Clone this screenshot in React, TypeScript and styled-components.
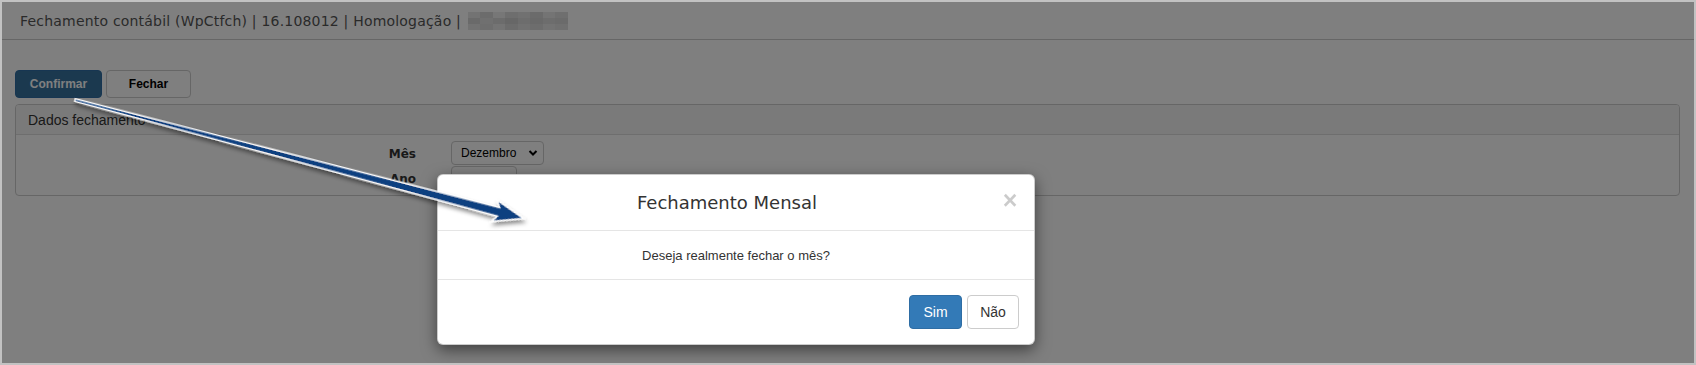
import React from "react";
import styled, { createGlobalStyle } from "styled-components";

const Global = createGlobalStyle`
  html, body { margin: 0; padding: 0; background: #ffffff; }
  body { width: 1696px; height: 365px; overflow: hidden; }
  * { box-sizing: border-box; }
`;

const Frame = styled.div`
  position: relative;
  width: 1696px;
  height: 365px;
  border: 2px solid #c2c2c2;
  background: #ffffff;
  overflow: hidden;
`;

const TopBar = styled.div`
  height: 38px;
  border-bottom: 1px solid #cccccc;
  display: flex;
  align-items: center;
  padding-left: 18px;
  font-family: "DejaVu Sans", Verdana, sans-serif;
  font-size: 14px;
  letter-spacing: 0.2px;
  color: #555555;
  gap: 7px;
`;

const Blur = styled.div`
  display: grid;
  grid-template-columns: repeat(8, 12.5px);
  grid-template-rows: repeat(3, 6px);
  height: 18px;
`;

const BlurCell = styled.div<{ $c: string }>`
  background: ${(p) => p.$c};
`;

const Content = styled.div`
  padding: 30px 14px 0 13px;
`;

const Toolbar = styled.div`
  display: flex;
  gap: 4px;
  margin-bottom: 6px;
`;

const ToolButton = styled.button<{ $primary?: boolean; $w: number }>`
  width: ${(p) => p.$w}px;
  height: 28px;
  border-radius: 4px;
  border: 1px solid ${(p) => (p.$primary ? "#2e6da4" : "#cccccc")};
  background: ${(p) => (p.$primary ? "#36729f" : "#ffffff")};
  color: ${(p) => (p.$primary ? "#ffffff" : "#000000")};
  font-family: "Liberation Sans", Arial, sans-serif;
  font-weight: bold;
  font-size: 12px;
  padding: 0;
`;

const Panel = styled.div`
  border: 1px solid #cccccc;
  border-radius: 4px;
`;

const PanelHeading = styled.div`
  height: 30px;
  background: #f5f5f5;
  border-bottom: 1px solid #dddddd;
  border-radius: 3px 3px 0 0;
  display: flex;
  align-items: center;
  padding-left: 12px;
  font-family: "Liberation Sans", Arial, sans-serif;
  font-size: 14px;
  color: #333333;
`;

const PanelBody = styled.div`
  display: grid;
  grid-template-columns: 400px auto;
  column-gap: 35px;
  row-gap: 1px;
  padding: 6px 0 5px 0;
`;

const FieldLabel = styled.div`
  height: 24px;
  display: flex;
  align-items: center;
  justify-content: flex-end;
  padding-top: 2px;
  font-family: "DejaVu Sans", Verdana, sans-serif;
  font-weight: bold;
  font-size: 12px;
  color: #333333;
`;

const SelectBox = styled.div`
  width: 93px;
  height: 24px;
  border: 1px solid #cccccc;
  border-radius: 4px;
  display: flex;
  align-items: center;
  justify-content: space-between;
  padding: 0 5px 0 9px;
  font-family: "Liberation Sans", Arial, sans-serif;
  font-size: 12px;
  color: #000000;
`;

const YearInput = styled.div`
  width: 66px;
  height: 24px;
  border: 1px solid #cccccc;
  border-radius: 4px;
`;

const Backdrop = styled.div`
  position: absolute;
  inset: 0;
  background: rgba(0, 0, 0, 0.5);
`;

const Modal = styled.div`
  position: absolute;
  left: 435px;
  top: 172px;
  width: 598px;
  background: #ffffff;
  border: 1px solid rgba(0, 0, 0, 0.2);
  border-radius: 6px;
  box-shadow: 0 5px 15px rgba(0, 0, 0, 0.5);
  display: flex;
  flex-direction: column;
`;

const ModalHeader = styled.div`
  height: 56px;
  border-bottom: 1px solid #e5e5e5;
  display: grid;
  grid-template-columns: 1fr auto;
  align-items: center;
  padding: 0 15px;
`;

const ModalTitle = styled.h4`
  margin: 0;
  text-align: center;
  font-family: "DejaVu Sans", Verdana, sans-serif;
  font-weight: normal;
  font-size: 18px;
  color: #333333;
`;

const CloseButton = styled.span`
  width: 18px;
  text-align: center;
  margin-top: -4px;
  font-family: "Liberation Sans", Arial, sans-serif;
  font-weight: bold;
  font-size: 25px;
  line-height: 1;
  color: #000000;
  opacity: 0.2;
`;

const ModalBody = styled.div`
  height: 49px;
  border-bottom: 1px solid #e5e5e5;
  display: flex;
  align-items: center;
  justify-content: center;
  font-family: "Liberation Sans", Arial, sans-serif;
  font-size: 13px;
  color: #333333;
`;

const ModalFooter = styled.div`
  height: 64px;
  display: flex;
  align-items: center;
  justify-content: flex-end;
  gap: 5px;
  padding-right: 15px;
`;

const DialogButton = styled.button<{ $primary?: boolean; $w: number }>`
  width: ${(p) => p.$w}px;
  height: 34px;
  border-radius: 4px;
  border: 1px solid ${(p) => (p.$primary ? "#2e6da4" : "#cccccc")};
  background: ${(p) => (p.$primary ? "#337ab7" : "#ffffff")};
  color: ${(p) => (p.$primary ? "#ffffff" : "#333333")};
  font-family: "Liberation Sans", Arial, sans-serif;
  font-size: 14px;
  padding: 0;
`;

const ArrowLayer = styled.svg`
  position: absolute;
  left: 0;
  top: 0;
  width: 1696px;
  height: 365px;
  pointer-events: none;
`;

const blurColors = [
  "#e6e6e6", "#d9d9d9", "#eeeeee", "#dcdcdc", "#e2e2e2", "#d6d6d6", "#e8e8e8", "#dedede",
  "#d4d4d4", "#e0e0e0", "#d8d8d8", "#cfcfcf", "#dadada", "#d2d2d2", "#dbdbdb", "#d7d7d7",
  "#e4e4e4", "#dddddd", "#e9e9e9", "#d9d9d9", "#e3e3e3", "#dadada", "#e6e6e6", "#e0e0e0",
];

const L = 464;

export default function App() {
  return (
    <>
      <Global />
      <Frame>
        <TopBar>
          <span>Fechamento contábil (WpCtfch) | 16.108012 | Homologação |</span>
          <Blur>
            {blurColors.map((c, i) => (
              <BlurCell key={i} $c={c} />
            ))}
          </Blur>
        </TopBar>
        <Content>
          <Toolbar>
            <ToolButton $primary $w={87}>Confirmar</ToolButton>
            <ToolButton $w={85}>Fechar</ToolButton>
          </Toolbar>
          <Panel>
            <PanelHeading>Dados fechamento</PanelHeading>
            <PanelBody>
              <FieldLabel>Mês</FieldLabel>
              <SelectBox>
                <span>Dezembro</span>
                <svg width="10" height="8" viewBox="0 0 10 8">
                  <path d="M1.5 2 L5 5.5 L8.5 2" fill="none" stroke="#000" strokeWidth="2" />
                </svg>
              </SelectBox>
              <FieldLabel>Ano</FieldLabel>
              <YearInput />
            </PanelBody>
          </Panel>
        </Content>
        <Backdrop />
        <Modal>
          <ModalHeader>
            <ModalTitle>Fechamento Mensal</ModalTitle>
            <CloseButton>×</CloseButton>
          </ModalHeader>
          <ModalBody>Deseja realmente fechar o mês?</ModalBody>
          <ModalFooter>
            <DialogButton $primary $w={53}>Sim</DialogButton>
            <DialogButton $w={52}>Não</DialogButton>
          </ModalFooter>
        </Modal>
        <ArrowLayer viewBox="0 0 1696 365">
          <defs>
            <filter id="sh" x="-10%" y="-50%" width="120%" height="200%">
              <feDropShadow dx="2" dy="3" stdDeviation="2" floodColor="#000" floodOpacity="0.45" />
            </filter>
          </defs>
          <g transform="translate(73,98) rotate(14.8)" filter="url(#sh)">
            <polygon
              points={`0,-1.2 ${L - 26},-4.5 ${L - 30},-11 ${L},0 ${L - 30},11 ${L - 26},4.5 0,1.2`}
              fill="#0c4180"
              stroke="#ffffff"
              strokeWidth="1.4"
              strokeLinejoin="miter"
            />
          </g>
        </ArrowLayer>
      </Frame>
    </>
  );
}
